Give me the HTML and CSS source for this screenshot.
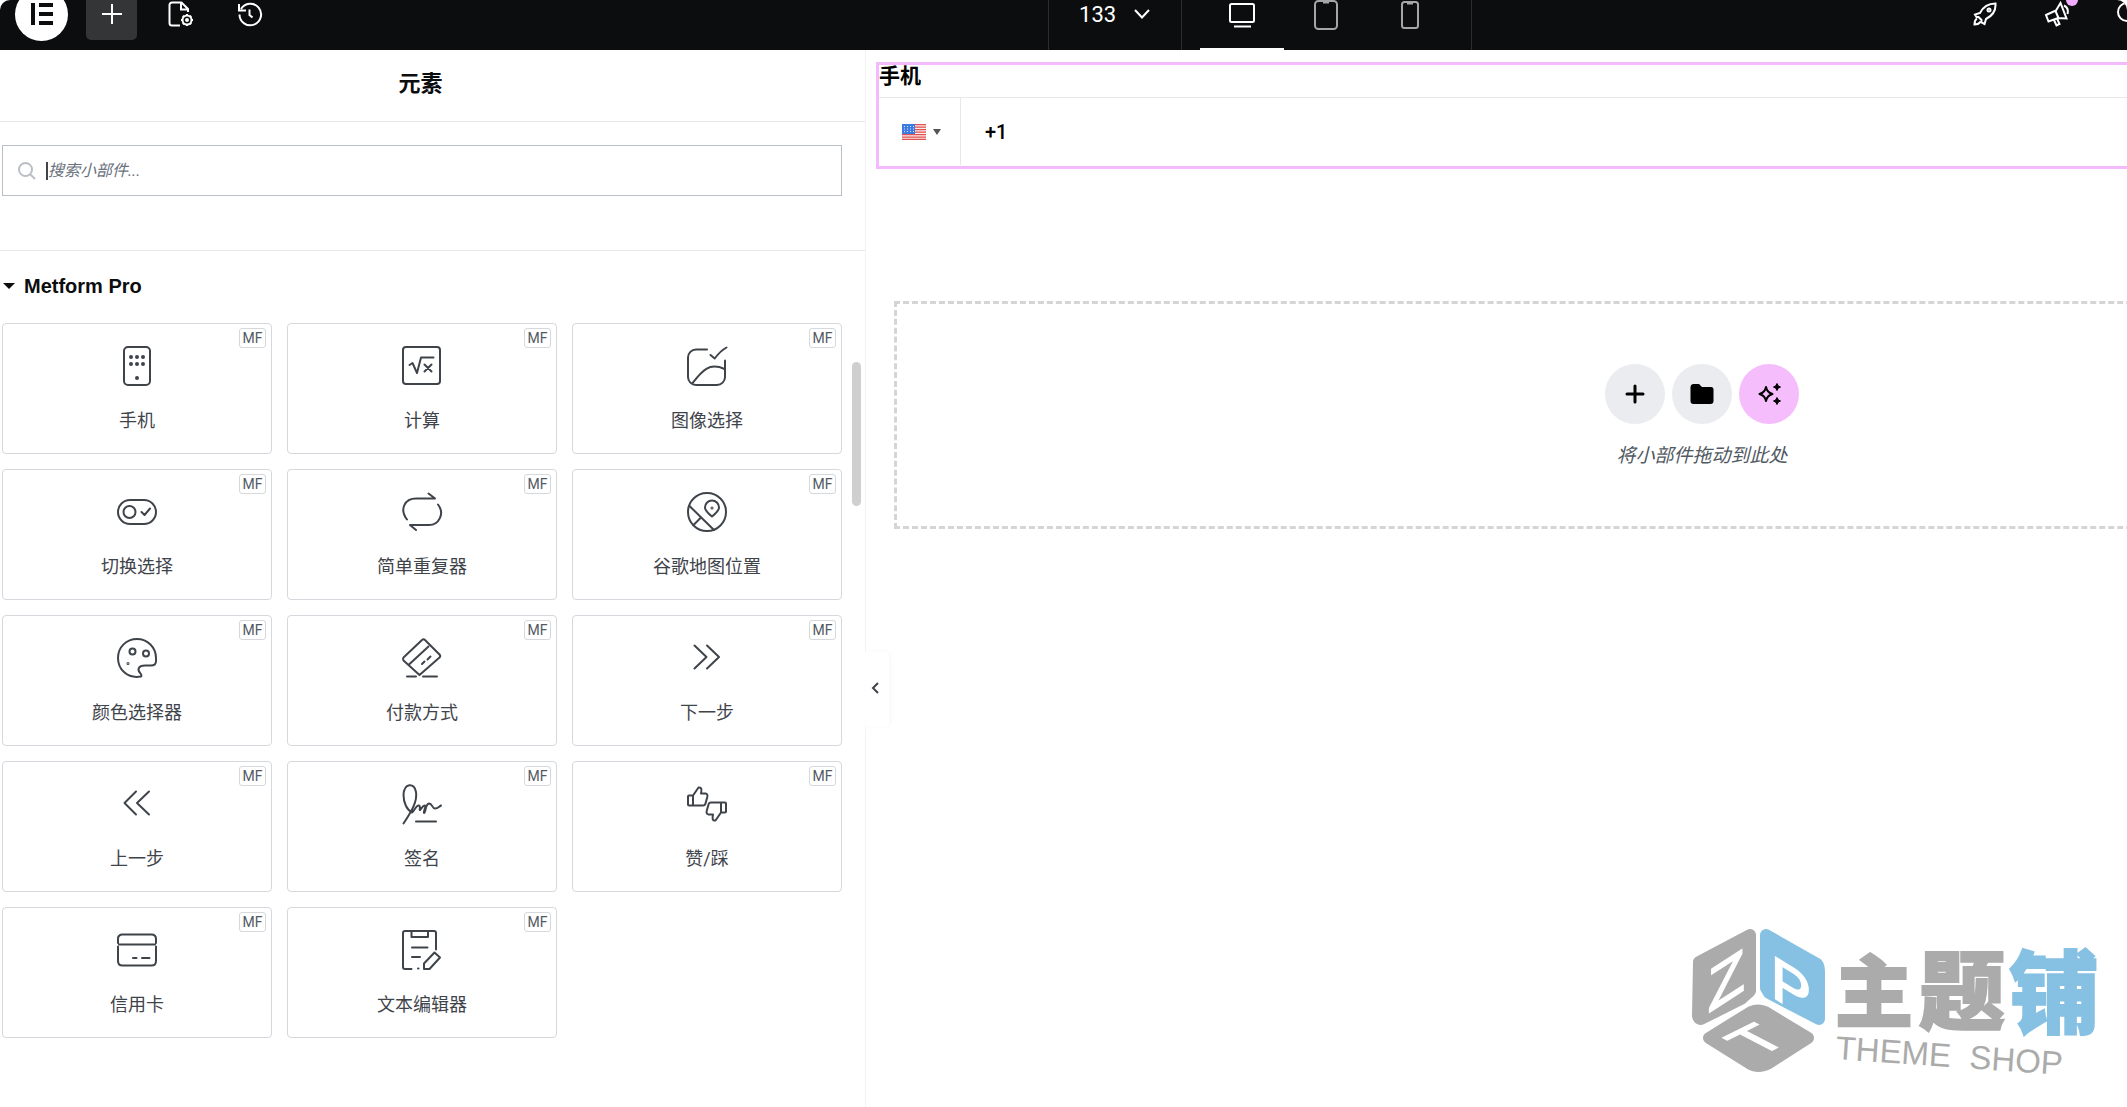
FILE: index.html
```html
<!DOCTYPE html>
<html lang="zh-CN">

<head>
    <meta charset="UTF-8">
    <meta name="viewport" content="width=device-width, initial-scale=1.0">
    <title>Elementor</title>
    <link rel="stylesheet" href="styles.css">
</head>

<body>

    <header class="topbar">
        <div class="topbar-left">
            <button class="logo" aria-label="Elementor">
                <svg width="22" height="22" viewBox="0 0 22 22">
                    <path d="M0 0h4v22H0zM8 0h14v4H8zM8 9h14v4H8zM8 18h14v4H8z" fill="#0c0d0e" />
                </svg>
            </button>
            <button class="tool active" aria-label="添加元素">
                <svg width="20" height="20" viewBox="0 0 20 20">
                    <path d="M10 0v20M0 10h20" />
                </svg>
            </button>
            <button class="tool" aria-label="页面设置">
                <svg width="26" height="26" viewBox="0 0 26 26">
                    <path d="M12 24.500H4a2.500 2.500 0 0 1-2.500-2.500V4A2.500 2.500 0 0 1 4 1.500h9.500l6.500 6.500v3M13 2v6.500h6.500" />
                    <circle cx="19" cy="19" r="4.500" />
                    <circle cx="19" cy="19" r="1" />
                    <path d="M19 13v2M19 23v2M13 19h2M23 19h2M14.800 14.800l1.200 1.200M22 22l1.200 1.200M14.800 23.200L16 22M22 16l1.200-1.200" />
                </svg>
            </button>
            <button class="tool" aria-label="历史记录">
                <svg width="26" height="26" viewBox="0 0 26 26">
                    <path d="M2.500 13.500A10.800 10.800 0 1 0 4 8M2 3v6.500h7M12.500 8.500V14l3 2.500" />
                </svg>
            </button>
        </div>

        <div class="topbar-center">
            <button class="doc-switch">133
                <svg width="16" height="10" viewBox="0 0 16 10">
                    <path d="M1 1l7 7.500L15 1" />
                </svg>
            </button>
            <div class="devices">
                <button class="device current" aria-label="桌面">
                    <svg width="26" height="26" viewBox="0 0 26 26">
                        <rect x="1" y="2" width="24" height="18" rx="1.500" />
                        <path d="M5 24.500h17" />
                    </svg>
                </button>
                <button class="device" aria-label="平板">
                    <svg width="24" height="30" viewBox="0 0 24 30">
                        <rect x="1" y="1" width="22" height="28" rx="3.500" />
                        <path d="M9 2.500h6" />
                    </svg>
                </button>
                <button class="device" aria-label="手机">
                    <svg width="18" height="28" viewBox="0 0 18 28">
                        <rect x="1" y="1" width="16" height="26" rx="2.500" />
                        <path d="M6 2.500h6" />
                    </svg>
                </button>
            </div>
        </div>

        <div class="topbar-right">
            <button class="action" aria-label="清单">
                <svg width="24" height="24" viewBox="0 0 24 24">
                    <path d="M7 11C10 5 15 1.500 22.500 1.500 23 8.500 19 14 13 17L11.500 22 8.500 20.500V18L5.500 15H3.500L2 12.500zM4 16.500C1.500 18 1.500 20 1.500 22.500 4 22.500 6 22.500 7.500 19.500" />
                    <circle cx="16" cy="8" r="1.500" />
                </svg>
            </button>
            <button class="action" aria-label="新功能">
                <svg width="26" height="26" viewBox="0 0 26 26">
                    <path d="M2 14L12 9.500 16.500 2 22.500 17.500 14 17 4.500 20.500zM11.500 10l3 7M10 19l2.500 5.500 3-1.500-2.500-5.500M20 4.500Q25 7 23.500 13" />
                </svg>
                <span class="dot"></span>
            </button>
            <button class="action" aria-label="搜索">
                <svg width="24" height="24" viewBox="0 0 24 24">
                    <circle cx="10" cy="10" r="9" />
                    <path d="M17 17l6 6" />
                </svg>
            </button>
        </div>
    </header>

    <main class="editor">
        <aside class="panel">
            <h1 class="panel-title">元素</h1>

            <div class="search-area">
                <label class="search">
                    <svg width="18" height="18" viewBox="0 0 18 18">
                        <circle cx="7.500" cy="7.500" r="6.500" />
                        <path d="M12.500 12.500l4.500 4.500" />
                    </svg>
                    <span class="caret"></span>
                    <input type="text" placeholder="搜索小部件..." aria-label="搜索小部件">
                </label>
            </div>

            <h2 class="category"><span class="arrow"></span>Metform Pro</h2>

            <div class="widgets">
                <button class="widget">
                    <svg class="icon" viewBox="0 0 40 40">
                        <rect x="7" y="1" width="26" height="38" rx="4" />
                        <path class="dots" d="M14 11h0M20 11h0M26 11h0M14 18h0M20 18h0M26 18h0M20 32h0" />
                    </svg>
                    <span class="name">手机</span>
                    <span class="tag">MF</span>
                </button>
                <button class="widget">
                    <svg class="icon" viewBox="0 0 40 40">
                        <rect x="1" y="1" width="37" height="37" rx="3" />
                        <path d="M7.500 19l3-2 4.500 10 4-15.500h12.500M22.500 18.500l7 7M29.500 18.500l-7 7" />
                    </svg>
                    <span class="name">计算</span>
                    <span class="tag">MF</span>
                </button>
                <button class="widget">
                    <svg class="icon" viewBox="0 0 40 40">
                        <path d="M20 3.500H9a8 8 0 0 0-8 8V31a8 8 0 0 0 8 8h21a8 8 0 0 0 8-8V14.500" />
                        <path d="M23.500 9l4.200 3.500C31 8 35 4 39.500 1.500M5.500 37C15 25 22 16 37.500 23" />
                    </svg>
                    <span class="name">图像选择</span>
                    <span class="tag">MF</span>
                </button>
                <button class="widget">
                    <svg class="icon" viewBox="0 0 40 40">
                        <rect x="1" y="8" width="38" height="24" rx="12" />
                        <circle cx="12.500" cy="20" r="6" />
                        <path d="M24.500 20l3 3 5.500-6.500" />
                    </svg>
                    <span class="name">切换选择</span>
                    <span class="tag">MF</span>
                </button>
                <button class="widget">
                    <svg class="icon" viewBox="0 0 40 40">
                        <path d="M5 27.500C-3 17 3 6.500 14 6.500h19l-6.500-5M36 12.500c7 9 1 20.500-9 20.500H8l6 5" />
                    </svg>
                    <span class="name">简单重复器</span>
                    <span class="tag">MF</span>
                </button>
                <button class="widget">
                    <svg class="icon" viewBox="0 0 40 40">
                        <circle cx="20" cy="20" r="19" />
                        <path d="M2.500 14L27 38M6.500 33l7.500-7.500M25 24.500C20 20.500 18 18 18 15.500a7 7 0 0 1 14 0C32 18 30 20.500 25 24.500z" />
                        <circle cx="25" cy="16" r=".5" />
                    </svg>
                    <span class="name">谷歌地图位置</span>
                    <span class="tag">MF</span>
                </button>
                <button class="widget">
                    <svg class="icon" viewBox="0 0 40 40">
                        <path d="M24 38.500C10 41 1 31 1 20 1 9 9.500 1 20 1s19 8.500 19 19v3q0 4.500-5 4.500h-6C21 27.500 20 32 23.500 35.500q1.500 2 .5 3z" />
                        <circle cx="15.500" cy="13.500" r="3" />
                        <circle cx="29" cy="15.500" r="3" />
                        <circle cx="11" cy="25.500" r=".5" />
                    </svg>
                    <span class="name">颜色选择器</span>
                    <span class="tag">MF</span>
                </button>
                <button class="widget">
                    <svg class="icon" viewBox="0 0 40 40">
                        <path d="M20 2q1.500-1.500 3 0l14.500 14.500q1.500 1.500 0 3L17.500 37 1.500 22.500q-1-1.500 0-3zM26.500 8.500L7 26.500M20 26l2.500-2.500M25.500 21.500l3-3M5 38.500h9M21 38.500h14" />
                    </svg>
                    <span class="name">付款方式</span>
                    <span class="tag">MF</span>
                </button>
                <button class="widget">
                    <svg class="icon" viewBox="0 0 40 40">
                        <path d="M7.500 7.500L19.500 19l-12 11.500M20 7.500L32 19 20 30.500" />
                    </svg>
                    <span class="name">下一步</span>
                    <span class="tag">MF</span>
                </button>
                <button class="widget">
                    <svg class="icon" viewBox="0 0 40 40">
                        <path d="M19 7.500L7.500 19 19 30.500M32 7.500L20 19l12 11.500" />
                    </svg>
                    <span class="name">上一步</span>
                    <span class="tag">MF</span>
                </button>
                <button class="widget">
                    <svg class="icon" viewBox="0 0 40 40">
                        <path d="M1.500 39.500C10 27 15.500 17 14 8 12.500-2 2-1 1.500 11 1.500 19 5 26 10 28.500c3-2 4-8 7-7 2 1 0 5 1 4.500 2-2 3-5 5-4.500 1.500 1-2 6-1 7.500 2 0 1-9 5-9.500 3.500 0 3 5 6 5 3 0 4-2 6-3M14 37.500h20" />
                    </svg>
                    <span class="name">签名</span>
                    <span class="tag">MF</span>
                </button>
                <button class="widget">
                    <svg class="icon" viewBox="0 0 40 40">
                        <path id="thumb" d="M6 11.500l5.500-8c3-.5 3.500 1.500 2.500 6h4.500q2.500.5 1.800 3.500l-1.800 6.500q-.5 2-2.500 2H2q-1 0-1-1v-8q0-1 1-1h4v10" />
                        <use href="#thumb" transform="rotate(180 20 20)" />
                    </svg>
                    <span class="name">赞/踩</span>
                    <span class="tag">MF</span>
                </button>
                <button class="widget">
                    <svg class="icon" viewBox="0 0 40 40">
                        <path d="M1 13V9q0-4.500 4.500-4.500h29Q39 4.500 39 9v4M2 14.500h36M1 16.500V31q0 4.500 4.500 4.500h29Q39 35.500 39 31V16.500M16 28h3.500M25 28h7.500" />
                    </svg>
                    <span class="name">信用卡</span>
                    <span class="tag">MF</span>
                </button>
                <button class="widget">
                    <svg class="icon" viewBox="0 0 40 40">
                        <path d="M34 19.500V3q0-2-2-2H3Q1 1 1 3v34q0 2 2 2h6.500M9.500 1v6H26V1M10 17.500h15.500M10 27h8M16 38.500h.5M32.500 22.500l5.500 5L27.500 39H22v-5.500z" />
                    </svg>
                    <span class="name">文本编辑器</span>
                    <span class="tag">MF</span>
                </button>
            </div>

            <div class="scrollbar"></div>
            <button class="collapse" aria-label="隐藏面板">
                <svg width="8" height="12" viewBox="0 0 8 12">
                    <path d="M7 1L2 6l5 5" />
                </svg>
            </button>
        </aside>

        <section class="preview">
            <div class="field">
                <label class="field-label" for="mobile">手机</label>
                <div class="phone">
                    <button class="country" aria-label="United States">
                        <svg width="24" height="16" viewBox="0 0 24 16">
                            <path fill="#fbeaea" d="M0 0h24v16H0z" />
                            <path stroke="#e0524f" stroke-width="1.300" d="M0 .6h24M0 3.100h24M0 5.600h24M0 8.100h24M0 10.600h24M0 13.100h24M0 15.400h24" />
                            <path fill="#3c7be0" d="M0 0h13v10H0z" />
                            <path stroke="#dfe8fb" stroke-width="1" stroke-dasharray="1 2" d="M2 2.500h10M2 5h10M2 7.500h10" />
                        </svg>
                        <span class="arrow small"></span>
                    </button>
                    <input id="mobile" type="tel" value="+1">
                </div>
            </div>

            <div class="dropzone">
                <div class="dropzone-buttons">
                    <button class="round" aria-label="添加容器">
                        <svg width="20" height="20" viewBox="0 0 20 20">
                            <path d="M10 2v16M2 10h16" stroke="#000" stroke-width="3" stroke-linecap="round" />
                        </svg>
                    </button>
                    <button class="round" aria-label="添加模板">
                        <svg width="24" height="20" viewBox="0 0 24 20">
                            <path d="M3 0h6l3 3h9a2.500 2.500 0 0 1 2.500 2.500V17a3 3 0 0 1-3 3H3.500a3 3 0 0 1-3-3V3A3 3 0 0 1 3 0z" />
                        </svg>
                    </button>
                    <button class="round ai" aria-label="AI">
                        <svg width="24" height="24" viewBox="0 0 24 24">
                            <path d="M9 5q1 5.500 6.500 7Q10 13.500 9 19 8 13.500 2.500 12 8 10.500 9 5z" fill="none" stroke="#000" stroke-width="2" stroke-linejoin="round" />
                            <path d="M20 1.500q.8 3 3.500 3.500-2.700.5-3.500 3.500-.8-3-3.500-3.500 2.700-.5 3.500-3.500zM20 15.500q.8 3 3.500 3.500-2.700.5-3.500 3.500-.8-3-3.500-3.500 2.700-.5 3.500-3.500z" stroke="#000" />
                        </svg>
                    </button>
                </div>
                <p class="dropzone-text">将小部件拖动到此处</p>
            </div>

            <svg class="watermark" width="420" height="170" viewBox="0 -10 420 170">
                <g stroke-width="12" stroke-linejoin="round">
                    <path d="M8 35L59 8V64L50 72 10 92Q7 92 7 88z" fill="#ababab" stroke="#ababab" />
                    <path d="M75 8L126 37Q128 39 128 45V92L78 66 75 61z" fill="#86c1e3" stroke="#86c1e3" />
                    <path d="M18 111L60 85Q67 82 74 85L117 111 78 136Q67 142 58 136z" fill="#ababab" stroke="#ababab" />
                </g>
                <g class="cube-letters">
                    <text transform="translate(17 86) skewY(-33)">Z</text>
                    <text transform="translate(80 69) skewY(31)">P</text>
                    <text transform="matrix(.9 -.45 .87 .45 67 130)">T</text>
                </g>
                <g class="brand">
                    <text x="144" y="94" font-size="78">主</text>
                    <text x="228" y="96" font-size="86">题</text>
                    <text x="318" y="99" font-size="90" class="blue">铺</text>
                </g>
                <text class="brand-en" transform="translate(144 132) rotate(4)">THEME<tspan x="134">SHOP</tspan></text>
            </svg>
        </section>
    </main>

</body>

</html>
```

FILE: styles.css
```css
* {
    box-sizing: border-box;
}

body {
    margin: 0;
    min-height: 100vh;
    display: flex;
    flex-direction: column;
    overflow: hidden;
    background: #fff;
    color: #3f444b;
    font-family: Roboto, "Noto Sans CJK SC", sans-serif;
}

button {
    padding: 0;
    border: 0;
    background: none;
    color: inherit;
    font-family: inherit;
    cursor: pointer;
}

input {
    border: 0;
    outline: 0;
    padding: 0;
    background: none;
    font-family: inherit;
}

/* top bar */
.topbar {
    display: grid;
    grid-template-columns: 8fr 423px 5fr;
    height: 50px;
    overflow: hidden;
    border-radius: 10px 10px 0 0;
    background: #0c0d0e;
    color: #fff;
}

.topbar svg {
    flex: none;
    fill: none;
    stroke: currentColor;
    stroke-width: 2;
}

.topbar-left,
.topbar-right {
    display: flex;
    align-items: center;
    height: 28px;
}

.topbar-left {
    gap: 18px;
    padding-left: 15px;
}

.logo,
.tool,
.action {
    display: flex;
    align-items: center;
    justify-content: center;
    flex: none;
}

.logo {
    width: 53px;
    height: 53px;
    border-radius: 50%;
    background: #fff;
}

.topbar .logo svg {
    stroke: none;
}

.tool {
    width: 51px;
    height: 51px;
    border-radius: 5px;
}

.tool.active {
    background: #343537;
}

.topbar-center {
    display: flex;
    margin-left: -1px;
    border-left: 1px solid #2c2d2f;
    border-right: 1px solid #2c2d2f;
}

.doc-switch {
    display: flex;
    align-items: center;
    justify-content: center;
    gap: 18px;
    width: 132px;
    height: 28px;
    font-size: 22px;
}

.devices {
    display: flex;
    flex: 1;
    justify-content: center;
    border-left: 1px solid #2c2d2f;
}

.device {
    display: flex;
    align-items: center;
    justify-content: center;
    width: 84px;
    padding-bottom: 18px;
    border-bottom: 4px solid transparent;
    color: #a4a6a8;
}

.device.current {
    border-color: #fff;
    color: #fff;
}

.topbar-right {
    justify-content: flex-end;
    margin-right: -38px;
}

.action {
    position: relative;
    width: 72px;
    height: 28px;
}

.dot {
    position: absolute;
    top: -6px;
    right: 15px;
    width: 12px;
    height: 12px;
    border-radius: 50%;
    background: #f0abfc;
}

/* layout */
.editor {
    display: flex;
    flex: 1;
}

.panel {
    position: relative;
    flex: none;
    width: 866px;
    border-right: 1px solid #f3f3f4;
}

.panel-title {
    margin: 0;
    padding: 16px 24px 19px 0;
    border-bottom: 1px solid #e6e8ea;
    color: #0c0d0e;
    font-size: 22px;
    line-height: 36px;
    text-align: center;
}

.search-area {
    padding: 23px 23px 54px 2px;
    border-bottom: 1px solid #e6e8ea;
}

.search {
    display: flex;
    align-items: center;
    height: 51px;
    padding-left: 15px;
    border: 1px solid #babfc5;
}

.search svg {
    fill: none;
    stroke: #babfc5;
    stroke-width: 2;
}

.caret {
    width: 2px;
    height: 18px;
    margin-left: 10px;
    background: #3f444b;
}

.search input {
    flex: 1;
    height: 46px;
    font-size: 16px;
    font-style: italic;
}

.search input::placeholder {
    color: #69727d;
}

/* widgets */
.category {
    display: flex;
    align-items: center;
    gap: 9px;
    margin: 0;
    padding: 23px 0 25px 3px;
    color: #0c0d0e;
    font-family: "Liberation Sans", sans-serif;
    font-size: 20px;
    line-height: 24px;
}

.arrow {
    border: 6px solid transparent;
    border-top-color: currentColor;
    border-bottom: 0;
}

.arrow.small {
    border-width: 6px 4px 0;
    color: #555;
}

.widgets {
    display: grid;
    grid-template-columns: repeat(3, 1fr);
    gap: 15px;
    padding: 0 23px 0 2px;
}

.widget {
    position: relative;
    display: flex;
    flex-direction: column;
    align-items: center;
    height: 131px;
    padding-top: 22px;
    border: 1px solid #d5d8dc;
    border-radius: 4px;
    color: #3f444b;
}

.icon {
    width: 40px;
    height: 40px;
    overflow: visible;
    fill: none;
    stroke: #3f444b;
    stroke-width: 2;
    stroke-linecap: round;
    stroke-linejoin: round;
}

.icon .dots {
    stroke-width: 4;
}

.name {
    margin-top: 21px;
    font-size: 18px;
    line-height: 28px;
}

.tag {
    position: absolute;
    top: 4px;
    right: 5px;
    width: 27px;
    border: 1px solid #d5d8dc;
    border-radius: 3px;
    color: #515962;
    font-size: 14px;
    line-height: 18px;
}

.scrollbar {
    position: absolute;
    top: 312px;
    right: 4px;
    width: 9px;
    height: 144px;
    border-radius: 5px;
    background: #cfcfcf;
}

.collapse {
    position: absolute;
    top: 602px;
    right: -24px;
    width: 24px;
    height: 74px;
    padding-right: 4px;
    border-radius: 0 4px 4px 0;
    background: #fff;
    box-shadow: 2px 0 4px rgba(0, 0, 0, 0.03);
}

.collapse svg {
    fill: none;
    stroke: #3f444b;
    stroke-width: 2;
}

/* preview, wider than the visible area */
.preview {
    position: relative;
    flex: 1;
    min-width: 0;
    overflow: hidden;
    padding: 12px 0 0 10px;
}

.field {
    margin-right: -400px;
    border: 3px solid #f3bafd;
}

.field-label {
    display: block;
    padding-bottom: 10px;
    color: #000;
    font-size: 21px;
    font-weight: bold;
    line-height: 22px;
}

.phone {
    display: flex;
    height: 69px;
    border-top: 1px solid #e6e8ea;
}

.country {
    display: flex;
    align-items: center;
    justify-content: center;
    gap: 7px;
    width: 82px;
    height: 67px;
    padding-left: 4px;
    border-right: 1px solid #e6e8ea;
}

.phone input {
    flex: 1;
    height: 68px;
    padding-left: 24px;
    color: #000;
    font-size: 20px;
    font-weight: 500;
}

.dropzone {
    margin: 132px -383px 0 18px;
    padding: 60px 0 56px;
    border: 3px dashed #d5d5d8;
    text-align: center;
}

.dropzone-buttons {
    display: flex;
    justify-content: center;
    gap: 7px;
}

.round {
    display: flex;
    align-items: center;
    justify-content: center;
    width: 60px;
    height: 60px;
    border-radius: 50%;
    background: #ebecf0;
}

.round.ai {
    background: #f6bdfd;
}

.dropzone-text {
    margin: 18px 0 0;
    color: #515962;
    font-size: 19px;
    font-style: italic;
    line-height: 28px;
}

.watermark {
    position: absolute;
    right: 16px;
    bottom: 20px;
    overflow: visible;
    fill: #ababab;
}

.cube-letters {
    fill: #fff;
    stroke: #fff;
    stroke-width: 2;
    font-family: "Liberation Sans", sans-serif;
    font-size: 60px;
}

.brand {
    stroke: #ababab;
    stroke-width: 2;
    font-family: "Noto Sans CJK SC", sans-serif;
    font-weight: 900;
}

.brand .blue {
    fill: #86c1e3;
    stroke: #86c1e3;
}

.brand-en {
    font-family: "Liberation Sans", sans-serif;
    font-size: 33px;
}
```
